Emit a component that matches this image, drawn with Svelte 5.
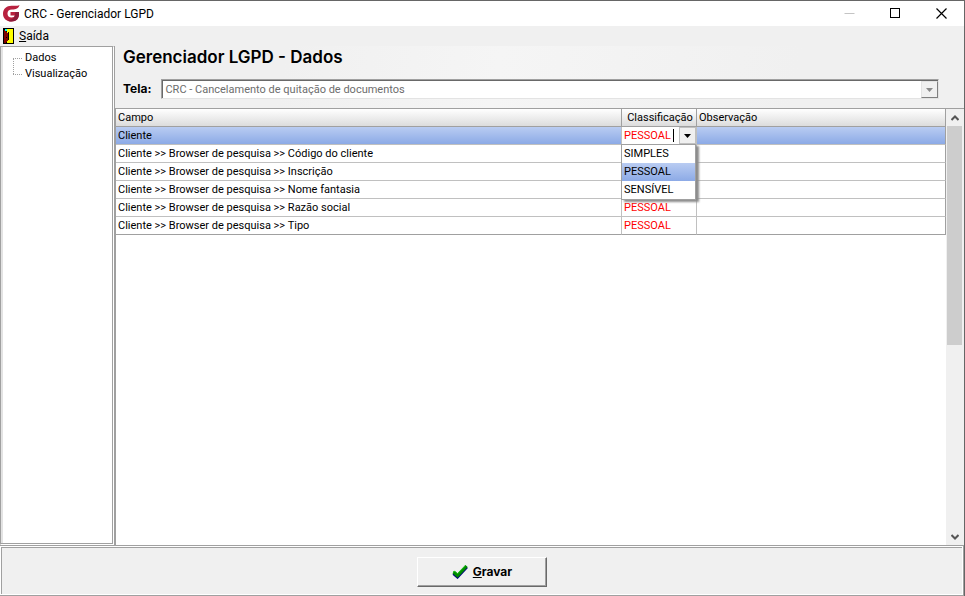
<script>
  const prefix = 'Cliente >> Browser de pesquisa >> ';
  const rows = ['Código do cliente', 'Inscrição', 'Nome fantasia', 'Razão social', 'Tipo'];
  const options = ['SIMPLES', 'PESSOAL', 'SENSÍVEL'];
  let value = $state('PESSOAL');
  let open = $state(true);

  function choose(option) {
    value = option;
    open = false;
  }
</script>

<div class="window">
  <header class="titlebar">
    <svg class="logo" width="17" height="17" viewBox="0 0 17 17" aria-hidden="true">
      <path d="M16.5 0C15.5 3.5 13 4.5 9 4.5C6 4.5 4.500 6 4.500 8.500C4.500 11 6 12.500 8.500 12.500C10.500 12.500 11.500 11.800 11.800 10.500H7.500V7H16V9C16 13.500 13.500 16.500 8.500 16.500C3.500 16.500 0 13.500 0 8.700C0 4 3.500 .8 8.500 .8C12 .8 14 1.200 16.500 0Z" fill="#b8213f" />
      <path d="M4 15.300C5.500 16.200 7 16.500 8.500 16.500C13.500 16.500 16 13.500 16 9V7H12.500L11.800 10.500C11.500 13.500 7.500 15.500 4 15.300Z" fill="#8c1a3a" />
    </svg>
    <h1>CRC - Gerenciador LGPD</h1>
    <div class="controls">
      <button aria-label="Minimizar" disabled>
        <svg width="11" height="11" viewBox="0 0 11 11"><path d="M.5 5.500H10.500" stroke="#c4c4c4" /></svg>
      </button>
      <button aria-label="Maximizar">
        <svg width="11" height="11" viewBox="0 0 11 11"><rect x=".5" y=".5" width="9" height="9" fill="none" stroke="#000" /></svg>
      </button>
      <button aria-label="Fechar">
        <svg width="11" height="11" viewBox="0 0 11 11"><path d="M.5 .5L10.500 10.500M10.500 .5L.5 10.500" stroke="#000" stroke-width="1.200" /></svg>
      </button>
    </div>
  </header>

  <nav class="menubar">
    <button>
      <svg width="11" height="16" viewBox="0 0 11 16" shape-rendering="crispEdges" aria-hidden="true">
        <path d="M0 0H11V16H0Z" fill="#000" />
        <path d="M4 1H10V15H4Z" fill="#ff0" />
        <path d="M1 2L5 5V13L2 15H1Z" fill="#800000" />
        <path d="M2 1H4V3H2Z" fill="#0ff" />
        <path d="M5 4H6V12H5ZM3 9H4V10H3Z" fill="#000" />
      </svg>
      <span><u>S</u>aída</span>
    </button>
  </nav>

  <div class="body">
    <aside>
      <ul>
        <li><a href="#dados">Dados</a></li>
        <li><a href="#visualizacao">Visualização</a></li>
      </ul>
    </aside>

    <main>
      <div class="form">
        <h2>Gerenciador LGPD - Dados</h2>
        <div class="field">
          <label for="tela">Tela:</label>
          <div class="select">
            <select id="tela" disabled>
              <option>CRC - Cancelamento de quitação de documentos</option>
            </select>
            <span class="drop" aria-hidden="true">
              <svg width="7" height="4" viewBox="0 0 7 4"><path d="M0 0H7L3.500 4Z" fill="#8a8a8a" /></svg>
            </span>
          </div>
        </div>
      </div>

      <div class="grid">
        <div class="sheet">
          <table>
            <colgroup><col /><col class="kind" /><col class="note" /></colgroup>
            <thead>
              <tr><th>Campo</th><th class="center">Classificação</th><th>Observação</th></tr>
            </thead>
            <tbody>
              <tr class="selected">
                <td>Cliente</td>
                <td class="editor">
                  <div class="combo">
                    <input role="combobox" aria-label="Classificação" aria-controls="kinds" aria-expanded={open} bind:value />
                    <i class="caret"></i>
                    <button aria-label="Abrir lista" onclick={() => (open = !open)}>
                      <svg width="7" height="4" viewBox="0 0 7 4"><path d="M0 0H7L3.500 4Z" fill="#000" /></svg>
                    </button>
                    {#if open}
                      <div class="popup" id="kinds" role="listbox">
                        {#each options as option}
                          <button role="option" aria-selected={option === value} onclick={() => choose(option)}>{option}</button>
                        {/each}
                      </div>
                    {/if}
                  </div>
                </td>
                <td></td>
              </tr>
              {#each rows as row}
                <tr><td>{prefix}{row}</td><td class="personal">PESSOAL</td><td></td></tr>
              {/each}
            </tbody>
          </table>
        </div>
        <div class="scroll">
          <button aria-label="Rolar para cima">
            <svg width="8" height="6" viewBox="0 0 8 6"><path d="M.5 5L4 1.500L7.500 5" fill="none" stroke="#555" stroke-width="2" /></svg>
          </button>
          <div class="track"><div class="thumb"></div></div>
          <button aria-label="Rolar para baixo">
            <svg width="8" height="6" viewBox="0 0 8 6"><path d="M.5 1L4 4.500L7.500 1" fill="none" stroke="#555" stroke-width="2" /></svg>
          </button>
        </div>
      </div>
    </main>
  </div>

  <footer>
    <div class="panel">
      <button class="save">
        <svg width="16" height="14" viewBox="0 0 16 14" aria-hidden="true">
          <path d="M1.500 8.500L5.500 12L14.800 2" fill="none" stroke="#000080" stroke-width="3" />
          <path d="M1.500 7L5.500 10.500L14.500 1" fill="none" stroke="#008a00" stroke-width="3.200" />
          <path d="M1 6.800L3 6.300L5.500 8.800L13.500 .5" fill="none" stroke="#1fc41f" stroke-width="1" />
        </svg>
        <span><u>G</u>ravar</span>
      </button>
    </div>
  </footer>
</div>

<style>
  :global(body) {
    margin: 0;
    background: #f0f0f0;
  }
  .window, .window :global(*) {
    box-sizing: border-box;
  }
  .window {
    display: flex;
    flex-direction: column;
    min-height: 100vh;
    border-top: 1px solid #666;
    border-right: 1px solid #666;
    background: #f0f0f0;
    color: #000;
    font: 11px/16px Roboto, sans-serif;
  }
  button, input, select {
    margin: 0;
    padding: 0;
    border: 0;
    border-radius: 0;
    background: none;
    color: inherit;
    font: inherit;
  }
  h1, h2, ul {
    margin: 0;
    padding: 0;
  }
  svg {
    display: block;
    flex: none;
  }
  .titlebar {
    display: flex;
    align-items: center;
    height: 25px;
    padding-left: 3px;
    background: #fff;
  }
  h1 {
    flex: 1;
    padding-left: 4px;
  }
  .controls {
    display: flex;
    height: 100%;
  }
  .controls button {
    display: grid;
    place-items: center;
    width: 46px;
  }
  .menubar {
    display: flex;
    height: 20px;
    padding-left: 3px;
  }
  .menubar button {
    display: flex;
    align-items: center;
    gap: 5px;
  }
  h1, .menubar button {
    font: 12px/16px Roboto, sans-serif;
  }
  .body {
    display: flex;
    flex: 1;
  }
  aside {
    width: 114px;
    border: 1px solid;
    border-color: #a0a0a0 #fff #fff #a0a0a0;
    padding: 1px;
    background: #fff;
    box-shadow: inset -1px -1px #a0a0a0, inset 2px 0 #e3e3e3;
  }
  ul {
    position: relative;
    padding: 2px 0 0 11px;
    list-style: none;
  }
  li {
    display: flex;
    align-items: center;
    gap: 3px;
    height: 16px;
  }
  li::before {
    width: 9px;
    border-top: 1px dotted #a0a0a0;
    content: "";
  }
  ul::before {
    position: absolute;
    top: 10px;
    left: 11px;
    height: 16px;
    border-left: 1px dotted #a0a0a0;
    content: "";
  }
  a {
    color: inherit;
    line-height: 18px;
    text-decoration: none;
  }
  main {
    display: flex;
    flex: 1;
    flex-direction: column;
    min-width: 0;
    border-left: 1px solid #a0a0a0;
  }
  .form {
    height: 62px;
    padding-left: 8px;
    background: linear-gradient(100deg, #f0f0f0 20%, #f5f5f5 45%, #f0f0f0 80%);
  }
  h2 {
    font: 600 17px/22px Inter, sans-serif;
  }
  .field {
    display: flex;
    align-items: center;
    gap: 10px;
    padding: 11px 25px 0 0;
  }
  label, .save {
    font: bold 12px/16px Inter, sans-serif;
  }
  .select {
    display: flex;
    flex: 1;
    height: 20px;
    border: 1px solid;
    border-color: #a0a0a0 #e3e3e3 #e3e3e3 #a0a0a0;
    background: #fff;
    box-shadow: inset 1px 1px #696969;
  }
  select {
    flex: 1;
    padding: 2px 0 0 3px;
    appearance: none;
    color: #6d6d6d;
    opacity: 1;
  }
  .drop {
    display: grid;
    place-items: center;
    width: 17px;
    margin-top: 1px;
    border: 1px solid;
    border-color: #e3e3e3 #808080 #808080 #e3e3e3;
    background: #f0f0f0;
  }
  .grid {
    display: flex;
    flex: 1;
    border-top: 1px solid #a0a0a0;
    border-left: 1px solid #a0a0a0;
    background: #fff;
  }
  .sheet {
    flex: 1;
  }
  table {
    width: 100%;
    border-spacing: 0;
    table-layout: fixed;
  }
  .kind {
    width: 75px;
  }
  .note {
    width: 249px;
  }
  th, td {
    height: 18px;
    padding: 1px 0 0 2px;
    border-right: 1px solid #c0c0c0;
    border-bottom: 1px solid #c0c0c0;
    line-height: 16px;
    text-align: left;
    white-space: nowrap;
  }
  th {
    border-color: #a0a0a0;
    background: linear-gradient(#fff, #dcdcdc);
    font-weight: normal;
  }
  th:last-child, td:last-child {
    border-right-color: #a0a0a0;
  }
  tbody tr:last-child td {
    border-bottom-color: #a0a0a0;
  }
  .center {
    text-align: center;
  }
  .selected td {
    background: linear-gradient(#b9ccf2, #8caae6);
  }
  .personal {
    color: #f00;
  }
  .selected .editor {
    padding: 0;
    background: #fff;
  }
  .combo {
    position: relative;
    display: flex;
    height: 17px;
  }
  .combo input {
    flex: 1;
    min-width: 0;
    padding: 1px 0 0 2px;
    outline: 0;
    color: #f00;
  }
  .caret {
    position: absolute;
    top: 2px;
    left: 51px;
    width: 1px;
    height: 13px;
    background: #000;
  }
  .combo > button {
    display: grid;
    place-items: center;
    width: 17px;
    border: 1px solid #c0c0c0;
    background: #f0f0f0;
  }
  .popup {
    position: absolute;
    top: 17px;
    right: 0;
    left: -1px;
    z-index: 1;
    border: 1px solid #a0a0a0;
    background: #fff;
    box-shadow: 3px 2px 2px #8c8c8c;
  }
  .popup button {
    display: block;
    width: 100%;
    height: 18px;
    padding-left: 2px;
    text-align: left;
  }
  .popup button[aria-selected="true"] {
    background: linear-gradient(#b9ccf2, #8caae6);
  }
  .scroll {
    display: flex;
    flex-direction: column;
    width: 18px;
    padding: 0 2px 0 1px;
    background: #f0f0f0;
  }
  .scroll button {
    display: grid;
    place-items: center;
    height: 17px;
  }
  .track {
    display: flex;
    flex: 1;
    flex-direction: column;
  }
  .thumb {
    flex: 6;
    background: #cdcdcd;
  }
  .track::after {
    flex: 5;
    content: "";
  }
  footer {
    border: 1px solid #a0a0a0;
    border-left: 0;
    padding: 1px;
    background: #fff;
  }
  .panel {
    display: flex;
    justify-content: center;
    padding: 9px 0 7px;
    border-top: 1px solid #a0a0a0;
    border-left: 1px solid #a0a0a0;
    background: #f0f0f0;
  }
  .save {
    display: flex;
    align-items: center;
    justify-content: center;
    gap: 5px;
    width: 130px;
    height: 30px;
    border: 1px solid;
    border-color: #fff #696969 #696969 #fff;
    box-shadow: inset -1px -1px #a0a0a0;
  }
</style>
